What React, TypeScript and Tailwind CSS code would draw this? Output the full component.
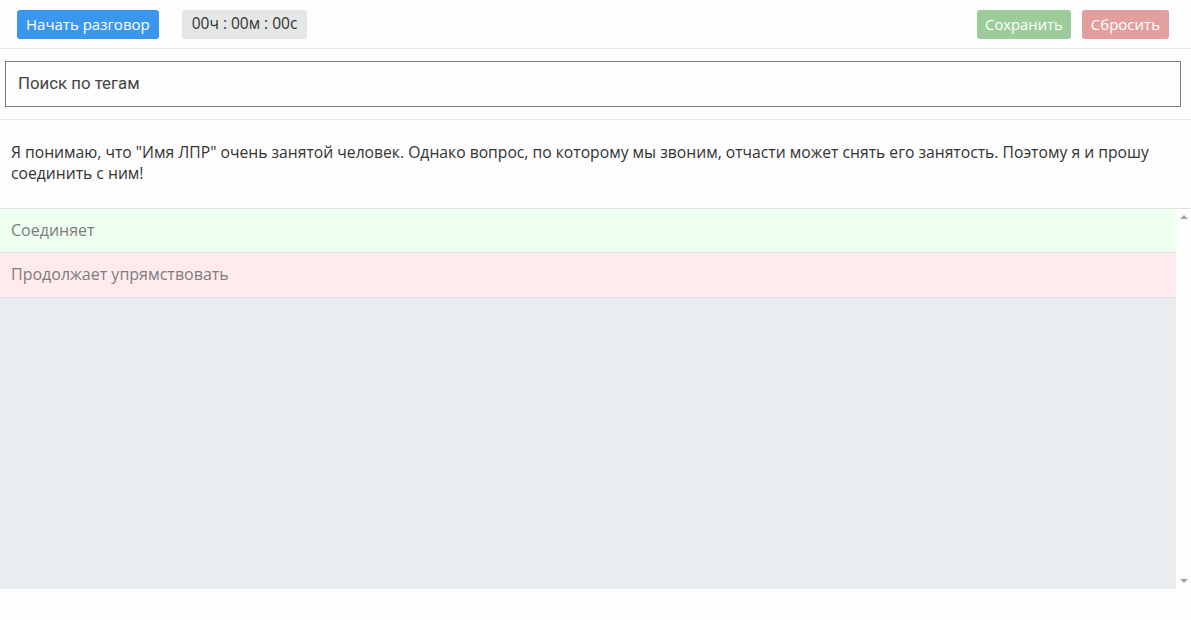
import React from 'react';

const App: React.FC = () => {
  return (
    <div className="h-[620px] w-full bg-[#fdfdfd] text-[#333] overflow-hidden flex flex-col" style={{ fontFamily: '"Open Sans", "Liberation Sans", sans-serif' }}>
      {/* Top bar */}
      <div className="h-[49px] flex items-center px-[17px] border-b border-[#e6e6e6]">
        <button className="h-[29px] px-[9px] rounded-[3px] bg-[#3a97f0] text-white text-[15px]">Начать разговор</button>
        <div className="ml-[23px] h-[29px] px-[10px] rounded-[3px] bg-[#e5e6e6] text-[15.5px] flex items-center text-[#333]">00ч : 00м : 00с</div>
        <div className="flex-1" />
        <button className="h-[29px] px-[8px] rounded-[3px] bg-[#9ccc9a] text-white text-[14.8px]">Сохранить</button>
        <button className="ml-[11px] mr-[5px] h-[29px] px-[9px] rounded-[3px] bg-[#e39f9f] text-white text-[15px]">Сбросить</button>
      </div>

      {/* Search */}
      <div className="px-[5px] pt-[12px] pb-[12px] pr-[10px] border-b border-[#e6e6e6]">
        <div className="h-[46px] border border-[#7a7a7a] flex items-center px-[12px] text-[16.8px] text-[#444]" style={{ fontFamily: 'Roboto, "Liberation Sans", sans-serif' }}>
          Поиск по тегам
        </div>
      </div>

      {/* Script text */}
      <div className="h-[89px] px-[11px] pt-[22px] text-[15.7px] leading-[21px] text-[#333] border-b border-[#e3e3e3]">
        Я понимаю, что "Имя ЛПР" очень занятой человек. Однако вопрос, по которому мы звоним, отчасти может снять его занятость. Поэтому я и прошу соединить с ним!
      </div>

      {/* Answers */}
      <div className="h-[380px] flex">
        <div className="flex-1 flex flex-col bg-[#e9edf0]">
          <div className="h-[44px] bg-[#edfff0] border-b border-[#e2e2e2] flex items-center pb-[2px] px-[11px] text-[16px] text-[#7d7d7d]">Соединяет</div>
          <div className="h-[45px] bg-[#ffebee] border-b border-[#e2e2e2] flex items-center pb-[2px] px-[11px] text-[16px] text-[#7d7d7d]">Продолжает упрямствовать</div>
        </div>
        <div className="w-[15px] flex flex-col items-center justify-between py-[6px] bg-[#fdfdfd]">
          <div className="w-0 h-0 border-l-[4px] border-r-[4px] border-b-[4px] border-l-transparent border-r-transparent border-b-[#a3a3a3]" />
          <div className="w-0 h-0 border-l-[4px] border-r-[4px] border-t-[4px] border-l-transparent border-r-transparent border-t-[#a3a3a3]" />
        </div>
      </div>
    </div>
  );
};

export default App;
